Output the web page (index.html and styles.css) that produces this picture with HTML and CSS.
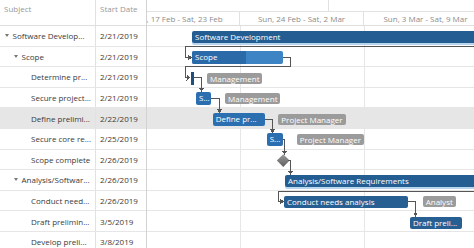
FILE: index.html
```html
<!DOCTYPE html>
<html lang="en">
<head>
  <meta charset="UTF-8" />
  <meta name="viewport" content="width=device-width, initial-scale=1.0" />
  <title>Gantt</title>
  <link rel="stylesheet" href="styles.css">
</head>
<body>
  <div class="gantt">
    <div class="grid">
      <div class="grid-head">
        <div class="col-subject">Subject</div>
        <div class="col-date">Start Date</div>
      </div>
      <div class="grid-row">
        <div class="col-subject lvl0"><span class="toggle"></span>Software Develop...</div>
        <div class="col-date">2/21/2019</div>
      </div>
      <div class="grid-row">
        <div class="col-subject lvl1"><span class="toggle"></span>Scope</div>
        <div class="col-date">2/21/2019</div>
      </div>
      <div class="grid-row">
        <div class="col-subject lvl2">Determine pr...</div>
        <div class="col-date">2/21/2019</div>
      </div>
      <div class="grid-row">
        <div class="col-subject lvl2">Secure project...</div>
        <div class="col-date">2/21/2019</div>
      </div>
      <div class="grid-row selected">
        <div class="col-subject lvl2">Define prelimi...</div>
        <div class="col-date">2/22/2019</div>
      </div>
      <div class="grid-row">
        <div class="col-subject lvl2">Secure core re...</div>
        <div class="col-date">2/25/2019</div>
      </div>
      <div class="grid-row">
        <div class="col-subject lvl2">Scope complete</div>
        <div class="col-date">2/26/2019</div>
      </div>
      <div class="grid-row">
        <div class="col-subject lvl1"><span class="toggle"></span>Analysis/Softwar...</div>
        <div class="col-date">2/26/2019</div>
      </div>
      <div class="grid-row">
        <div class="col-subject lvl2">Conduct need...</div>
        <div class="col-date">2/26/2019</div>
      </div>
      <div class="grid-row">
        <div class="col-subject lvl2">Draft prelimin...</div>
        <div class="col-date">3/5/2019</div>
      </div>
      <div class="grid-row">
        <div class="col-subject lvl2">Develop preli...</div>
        <div class="col-date">3/8/2019</div>
      </div>
    </div>

    <div class="chart">
      <div class="scale">
        <div class="months">
          <div class="month" style="width:496px;margin-left:-314px"></div>
          <div class="month" style="width:549px"></div>
        </div>
        <div class="weeks">
          <div class="week">Sun, 17 Feb - Sat, 23 Feb</div>
          <div class="week">Sun, 24 Feb - Sat, 2 Mar</div>
          <div class="week">Sun, 3 Mar - Sat, 9 Mar</div>
        </div>
      </div>

      <div class="chart-body">
        <div class="chart-row"></div>
        <div class="chart-row"></div>
        <div class="chart-row"></div>
        <div class="chart-row"></div>
        <div class="chart-row selected"></div>
        <div class="chart-row"></div>
        <div class="chart-row"></div>
        <div class="chart-row"></div>
        <div class="chart-row"></div>
        <div class="chart-row"></div>
        <div class="chart-row"></div>

        <div class="week-line" style="left:93px"></div>
        <div class="week-line" style="left:217px"></div>

        <!-- summary tasks -->
        <div class="task summary" style="left:45px;top:4.7px;width:300px">Software Development</div>
        <div class="task summary" style="left:138px;top:149px;width:300px">Analysis/Software Requirements</div>

        <!-- scope -->
        <div class="task progress" style="left:45px;top:25px;width:91px">
          <div class="done" style="width:54px"></div>
          <span>Scope</span>
        </div>

        <div class="task dark thin" style="left:43.5px;top:45.5px;width:3px"></div>
        <div class="resource" style="left:60px;top:46.5px">Management</div>

        <div class="task" style="left:49px;top:66px;width:15px">S...</div>
        <div class="resource" style="left:78px;top:67px">Management</div>

        <div class="task" style="left:65.7px;top:87.3px;width:52.3px">Define pr...</div>
        <div class="resource" style="left:131.3px;top:88px">Project Manager</div>

        <div class="task" style="left:119.7px;top:107.3px;width:16.6px">S...</div>
        <div class="resource" style="left:149.7px;top:108px">Project Manager</div>

        <div class="milestone" style="left:132px;top:130.2px"></div>

        <div class="task dark" style="left:137px;top:169.7px;width:124.3px">Conduct needs analysis</div>
        <div class="resource" style="left:275.7px;top:170.2px">Analyst</div>

        <div class="task dark" style="left:263px;top:190.7px;width:52px">Draft preli...</div>

        <svg class="links" width="327" height="222" viewBox="0 0 327 222">
          <g fill="none" stroke="#555" stroke-width="1">
            <path d="M327 20.5H38.5V31.5H43" />
            <path d="M136 31.5H143.5V40.5H38.5V51.5H41" />
            <path d="M46.5 51.5H54.5V63" />
            <path d="M64 72.5H72.5V84" />
            <path d="M118 93.5H125.5V104" />
            <path d="M136.3 113.5H137.5V126" />
            <path d="M140.5 134.5H143.5V146" />
            <path d="M327 165.5H131.5V175.5H134" />
            <path d="M261.3 175.5H268.5V187.5" />
          </g>
          <g fill="#555">
            <polygon points="41,28.5 45,31.5 41,34.5" />
            <polygon points="39.5,48.5 43.5,51.5 39.5,54.5" />
            <polygon points="52,62 54.5,66 57,62" />
            <polygon points="70,83.3 72.5,87.3 75,83.3" />
            <polygon points="123,103.3 125.5,107.3 128,103.3" />
            <polygon points="135,125 137.5,129 140,125" />
            <polygon points="141,145 143.5,149 146,145" />
            <polygon points="133,172.5 137,175.5 133,178.5" />
            <polygon points="266,186.7 268.5,190.7 271,186.7" />
          </g>
        </svg>
      </div>
    </div>
  </div>
</body>
</html>
```

FILE: styles.css
```css
body {
  margin: 0;
  background: #fff;
  font-family: 'Segoe UI', 'Open Sans', sans-serif;
  font-size: 8px;
  color: #3a3a3a;
  overflow: hidden;
}
.gantt {
  display: flex;
  height: 248px;
  width: 474px;
}
.grid {
  width: 147px;
  flex: none;
  box-sizing: border-box;
  border-right: 1px solid #d2d2d2;
}
.grid-head,
.grid-row {
  display: flex;
  box-sizing: border-box;
}
.grid-head {
  height: 26px;
  border-bottom: 1px solid #dedede;
  color: #999;
}
.grid-head > div {
  padding-top: 3px;
  line-height: 12px;
}
.grid-row {
  height: 20.6px;
  border-bottom: 1px solid #e6e6e6;
  align-items: stretch;
}
.grid-row > div {
  display: flex;
  align-items: center;
  white-space: nowrap;
  overflow: hidden;
}
.grid-row.selected {
  background: #e6e6e6;
}
.col-subject {
  width: 96px;
  box-sizing: border-box;
  border-right: 1px solid #e2e2e2;
  padding-left: 4px;
}
.col-date {
  flex: 1;
  padding-left: 4px;
}
.lvl0 { padding-left: 4px; }
.lvl1 { padding-left: 13px; }
.lvl2 { padding-left: 31px; }
.toggle {
  width: 0;
  height: 0;
  border-left: 2.5px solid transparent;
  border-right: 2.5px solid transparent;
  border-top: 3px solid #777;
  margin-right: 4px;
  margin-left: 0.5px;
}

.chart {
  flex: 1;
  overflow: hidden;
  position: relative;
}
.scale {
  height: 26px;
  box-sizing: border-box;
  border-bottom: 1px solid #dedede;
  color: #8c8c8c;
}
.months,
.weeks {
  display: flex;
  white-space: nowrap;
}
.months {
  height: 12px;
  box-sizing: border-box;
  border-bottom: 1px solid #e2e2e2;
}
.month {
  flex: none;
  box-sizing: border-box;
  border-right: 1px solid #e2e2e2;
}
.weeks {
  height: 13px;
  margin-left: -31px;
}
.week {
  flex: none;
  width: 124px;
  box-sizing: border-box;
  border-right: 1px solid #e2e2e2;
  text-align: center;
  line-height: 13px;
}
.chart-body {
  position: relative;
  height: 222px;
}
.chart-row {
  height: 20.6px;
  box-sizing: border-box;
  border-bottom: 1px solid #e6e6e6;
}
.chart-row.selected {
  background: #e6e6e6;
}
.week-line {
  position: absolute;
  top: 0;
  bottom: 0;
  width: 1px;
  background: #e6e6e6;
}

.task {
  position: absolute;
  height: 12.5px;
  line-height: 12.5px;
  padding: 0 3px;
  box-sizing: border-box;
  background: #2c6fb0;
  color: #fff;
  border-radius: 2px;
  white-space: nowrap;
  overflow: hidden;
}
.task.summary {
  height: 12px;
  line-height: 12px;
  background: #245d91;
  box-shadow: 0 2px 0 #b9d5ee;
  border-radius: 2px 0 0 2px;
}
.task.dark {
  background: #285f93;
}
.task.thin {
  height: 13px;
  padding: 0;
  background: #1f4f7f;
  border-radius: 0;
}
.task.progress {
  background: #3d84c5;
  padding: 0;
}
.task.progress .done {
  position: absolute;
  left: 0;
  top: 0;
  bottom: 0;
  background: #2b6aa8;
}
.task.progress span {
  position: relative;
  padding-left: 3px;
}
.resource {
  position: absolute;
  height: 11px;
  line-height: 11px;
  padding: 0 3px;
  background: #9b9b9b;
  color: #fff;
  border-radius: 2px;
  white-space: nowrap;
}
.milestone {
  position: absolute;
  width: 8.5px;
  height: 8.5px;
  transform: rotate(45deg);
  background: linear-gradient(135deg, #9a9a9a, #5e5e5e);
}
.links {
  position: absolute;
  left: 0;
  top: 0;
  overflow: visible;
  shape-rendering: crispEdges;
}
```
